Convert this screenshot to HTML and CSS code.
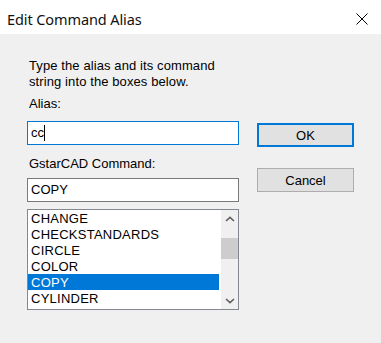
FILE: index.html
```html
<!DOCTYPE html>
<html>
<head>
<meta charset="utf-8">
<link rel="stylesheet" href="styles.css">
</head>
<body>
<div class="dialog">
  <div class="titlebar">
    <span class="title">Edit Command Alias</span>
    <svg class="close" width="12" height="12" viewBox="0 0 12 12"><path d="M0.5 0.5 L11.5 11.5 M11.5 0.5 L0.5 11.5" stroke="#000" stroke-width="1" fill="none"/></svg>
  </div>
  <div class="content">
    <div class="left">
      <p class="intro">Type the alias and its command<br>string into the boxes below.</p>
      <div class="label alias-label">Alias:</div>
      <div class="field focused"><span>cc</span><span class="caret"></span></div>
      <div class="label cmd-label">GstarCAD Command:</div>
      <div class="field">COPY</div>
      <div class="listbox">
        <ul class="items">
          <li>CHANGE</li>
          <li>CHECKSTANDARDS</li>
          <li>CIRCLE</li>
          <li>COLOR</li>
          <li class="selected">COPY</li>
          <li>CYLINDER</li>
        </ul>
        <div class="scrollbar">
          <div class="arrow"><svg width="10" height="6" viewBox="0 0 10 6"><path d="M1 5 L5 1.3 L9 5" stroke="#606060" stroke-width="1.6" fill="none"/></svg></div>
          <div class="track"><div class="thumb"></div></div>
          <div class="arrow"><svg width="10" height="6" viewBox="0 0 10 6"><path d="M1 1 L5 4.7 L9 1" stroke="#606060" stroke-width="1.6" fill="none"/></svg></div>
        </div>
      </div>
    </div>
    <div class="right">
      <div class="button default">OK</div>
      <div class="button cancel">Cancel</div>
    </div>
  </div>
</div>
</body>
</html>
```
FILE: styles.css
```css
html, body {
  margin: 0;
  padding: 0;
}
body {
  width: 381px;
  height: 343px;
  background: #f0f0f0;
  font-family: "Liberation Sans", Arial, sans-serif;
  font-size: 13px;
  color: #000;
  overflow: hidden;
}
.dialog {
  width: 381px;
  height: 343px;
  display: flex;
  flex-direction: column;
}
.titlebar {
  height: 34px;
  background: #fff;
  display: flex;
  align-items: center;
  justify-content: space-between;
  padding: 0 13px 0 7px;
  flex-shrink: 0;
}
.title {
  font-family: "Noto Sans", "Open Sans", sans-serif;
  font-size: 14.5px;
  color: #111;
  letter-spacing: -0.1px;
  margin-top: 3px;
}
.close {
  display: block;
  margin-top: 3px;
}
.content {
  display: flex;
  padding: 24px 0 0 27px;
}
.left {
  width: 212px;
  display: flex;
  flex-direction: column;
}
.intro {
  margin: 0;
  padding-left: 2px;
  line-height: 16px;
  letter-spacing: 0.1px;
  white-space: nowrap;
}
.label {
  line-height: 16px;
  padding-left: 2px;
}
.alias-label {
  margin-top: 6px;
}
.cmd-label {
  margin-top: 11px;
}
.field {
  height: 22px;
  border: 1px solid #7a7a7a;
  background: #fff;
  display: flex;
  align-items: center;
  padding-left: 3px;
  margin-top: 6px;
  line-height: 16px;
}
.focused {
  border-color: #0078d7;
  margin-top: 9px;
}
.caret {
  display: inline-block;
  width: 1px;
  height: 16px;
  background: #000;
}
.listbox {
  margin-top: 7px;
  height: 99px;
  border: 1px solid #828790;
  background: #fff;
  display: flex;
}
.items {
  list-style: none;
  margin: 0;
  padding: 0;
  flex: 1;
}
.items li {
  height: 16px;
  line-height: 17px;
  padding-left: 3px;
  margin-right: 2px;
  letter-spacing: 0.25px;
}
.items li.selected {
  background: #0078d7;
  color: #fff;
}
.scrollbar {
  width: 17px;
  background: #f0f0f0;
  display: flex;
  flex-direction: column;
}
.arrow {
  height: 17px;
  display: flex;
  align-items: center;
  justify-content: center;
}
.track {
  flex: 1;
  padding-top: 11px;
}
.thumb {
  height: 21px;
  background: #cdcdcd;
}
.right {
  padding: 65px 0 0 18px;
  display: flex;
  flex-direction: column;
}
.button {
  width: 95px;
  height: 22px;
  background: #e1e1e1;
  border: 1px solid #adadad;
  display: flex;
  align-items: center;
  justify-content: center;
}
.button.default {
  border: 2px solid #0078d7;
  width: 93px;
  height: 20px;
}
.button.cancel {
  margin-top: 21px;
}
```
